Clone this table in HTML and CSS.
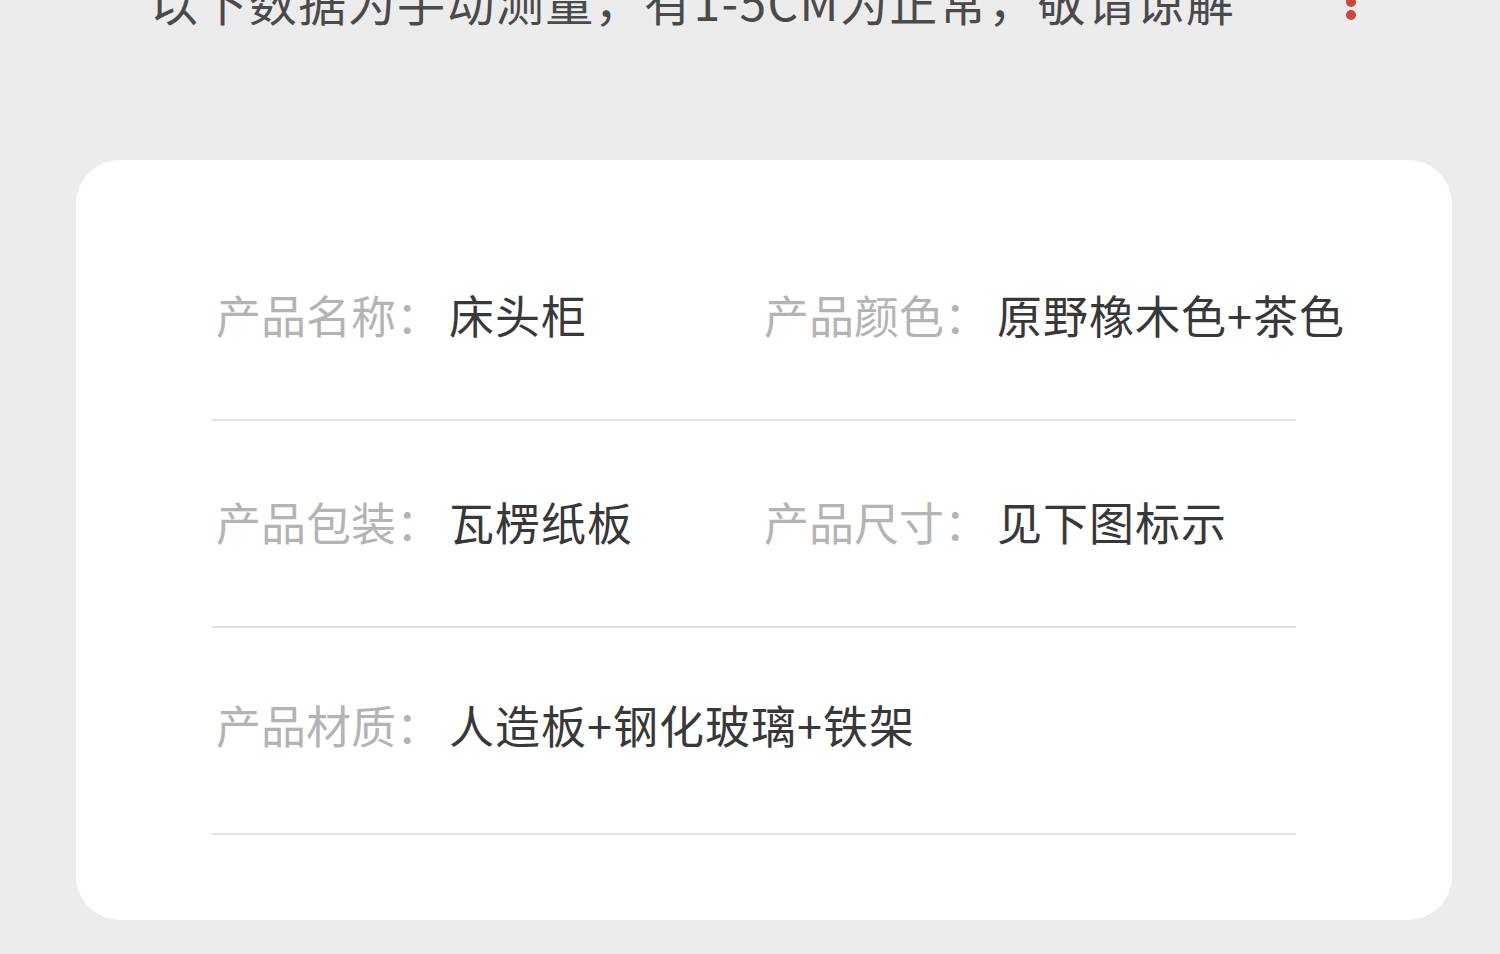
FILE: index.html
```html
<!DOCTYPE html>
<html lang="zh-CN">
<head>
<meta charset="utf-8">
<title>产品信息</title>
<link rel="stylesheet" href="styles.css">
</head>
<body>
<header class="notice">
  <p class="notice-text">以下数据为手动测量，有1-5CM为正常，敬请谅解</p>
  <svg class="more" width="12" height="40" viewBox="0 0 12 40" aria-hidden="true">
    <circle cx="6" cy="6" r="5" fill="#c8483c"/>
    <circle cx="6" cy="19" r="5" fill="#c8483c"/>
    <circle cx="6" cy="32" r="5" fill="#c8483c"/>
  </svg>
</header>
<main class="card">
  <div class="row">
    <div class="cell"><span class="label">产品名称：</span><span class="value">床头柜</span></div>
    <div class="cell"><span class="label">产品颜色：</span><span class="value">原野橡木色+茶色</span></div>
  </div>
  <div class="row">
    <div class="cell"><span class="label">产品包装：</span><span class="value">瓦楞纸板</span></div>
    <div class="cell"><span class="label">产品尺寸：</span><span class="value">见下图标示</span></div>
  </div>
  <div class="row">
    <div class="cell"><span class="label">产品材质：</span><span class="value">人造板+钢化玻璃+铁架</span></div>
  </div>
</main>
</body>
</html>
```
FILE: styles.css
```css
html, body {
  margin: 0;
  padding: 0;
}
body {
  width: 1500px;
  height: 954px;
  overflow: hidden;
  background: #ececec;
  font-family: "Noto Sans CJK SC", "Noto Sans", sans-serif;
}
.notice {
  height: 160px;
  display: flex;
  align-items: flex-start;
  padding: 0 143px 0 150px;
  box-sizing: border-box;
  overflow: hidden;
}
.notice-text {
  margin: -24px 0 0 0;
  font-size: 48px;
  line-height: 48px;
  color: #4a4a4a;
  white-space: nowrap;
  letter-spacing: 1.4px;
}
.more {
  margin: -17px 0 0 auto;
  flex: none;
}
.card {
  margin-left: 76px;
  width: 1376px;
  height: 760px;
  box-sizing: border-box;
  background: #ffffff;
  border-radius: 44px;
  padding: 54px 156px 0 136px;
}
.row {
  height: 207px;
  box-sizing: border-box;
  display: grid;
  grid-template-columns: 548px 1fr;
  align-items: center;
  border-bottom: 2px solid #e2e2e2;
  padding: 0 0 4px 4px;
}
.row:last-child {
  padding-bottom: 12px;
}
.cell {
  display: flex;
  align-items: center;
  white-space: nowrap;
  font-size: 45px;
  line-height: 60px;
}
.label {
  width: 233px;
  flex: none;
  color: #b4b4b4;
}
.value {
  color: #383838;
  letter-spacing: 1px;
}
```
